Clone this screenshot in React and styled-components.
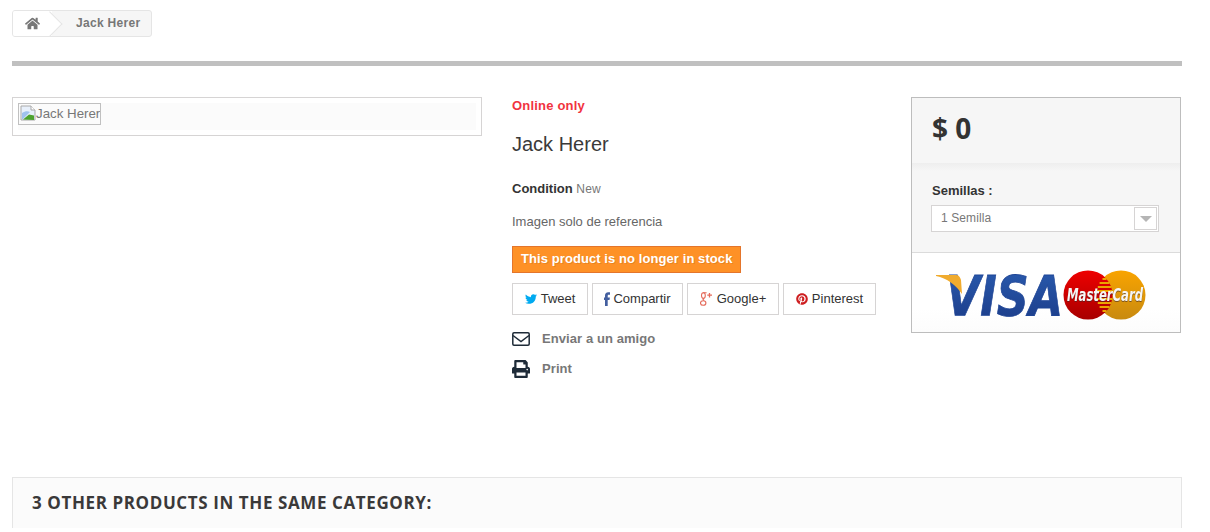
import React from 'react';
import styled, { createGlobalStyle } from 'styled-components';
import { FaHome, FaTwitter, FaPinterest, FaPrint } from 'react-icons/fa';

const GlobalStyle = createGlobalStyle`
  html, body {
    margin: 0;
    padding: 0;
    background: #fff;
    overflow: hidden;
  }
  body {
    font: 13px/18px "Liberation Sans", Arial, sans-serif;
    color: #777;
  }
`;

const Page = styled.div`
  width: 1170px;
  height: 532px;
  margin-left: 12px;
  padding-top: 10px;
  box-sizing: border-box;
  overflow: hidden;
`;

const Breadcrumb = styled.nav`
  display: inline-flex;
  height: 27px;
  box-sizing: border-box;
  border: 1px solid #e5e5e5;
  border-radius: 3px;
  background: #f6f6f6;
  overflow: hidden;
  vertical-align: top;
`;

const HomeCrumb = styled.a`
  position: relative;
  display: flex;
  align-items: center;
  width: 39px;
  padding-left: 12px;
  box-sizing: border-box;
  background: #fff;
  color: #777;
  font-size: 15px;

  svg {
    position: relative;
    z-index: 1;
  }

  &::after {
    content: '';
    position: absolute;
    top: 3.650px;
    left: 27.650px;
    width: 17.700px;
    height: 17.700px;
    box-sizing: border-box;
    transform: rotate(45deg);
    background: #fff;
    border-top: 1px solid #e5e5e5;
    border-right: 1px solid #e5e5e5;
  }
`;

const CrumbLabel = styled.span`
  padding: 0 11px 0 24px;
  font-size: 12px;
  line-height: 25px;
  font-weight: bold;
  letter-spacing: 0.3px;
  color: #777;
`;

const Rule = styled.hr`
  height: 5px;
  margin: 24px 0 31px;
  border: 0;
  background: #c0c0c0;
`;

const ProductRow = styled.div`
  display: grid;
  grid-template-columns: 470px 369px 270px;
  column-gap: 30px;
  align-items: start;
  height: 380px;
`;

const ImageFrame = styled.div`
  height: 39px;
  box-sizing: border-box;
  padding: 5px;
  border: 1px solid #d6d4d4;
`;

const ImageFill = styled.div`
  height: 27px;
  background: #fbfbfb;
`;

const BrokenImage = styled.span`
  display: inline-flex;
  align-items: flex-start;
  height: 22px;
  width: 83px;
  box-sizing: border-box;
  border: 1px solid #c0c0c0;
  font-size: 13.300px;
  line-height: 20px;
  color: #777;
  white-space: nowrap;
  overflow: hidden;

  svg {
    flex-shrink: 0;
    margin: 1px 0 0 1px;
  }
`;

const Details = styled.div`
  display: flex;
  flex-direction: column;
  align-items: flex-start;
  letter-spacing: 0.08px;
`;

const OnlineOnly = styled.p`
  margin: 0;
  height: 18px;
  line-height: 18px;
  font-weight: bold;
  letter-spacing: 0.2px;
  color: #f13340;
`;

const Title = styled.h1`
  margin: 17px 0 0;
  font-size: 20px;
  line-height: 24px;
  font-weight: normal;
  letter-spacing: 0;
  color: #3a3939;
`;

const Condition = styled.p`
  margin: 24px 0 0;
  line-height: 18px;
  font-size: 12px;
  letter-spacing: 0.25px;
  color: #777;

  strong {
    font-size: 13px;
    letter-spacing: 0;
    color: #333;
  }
`;

const Description = styled.p`
  margin: 15px 0 0;
  font-size: 13px;
  line-height: 18px;
  letter-spacing: 0;
  color: #666;
`;

const StockBadge = styled.span`
  margin-top: 15px;
  height: 27px;
  box-sizing: border-box;
  padding: 0 8px;
  border: 1px solid #e4752b;
  background: #fe9126;
  color: #fff;
  font-weight: bold;
  line-height: 23px;
  text-shadow: 1px 1px rgba(0, 0, 0, 0.1);
`;

const ShareRow = styled.div`
  display: flex;
  gap: 4px;
  margin-top: 10px;
`;

const ShareButton = styled.a`
  display: flex;
  align-items: center;
  justify-content: center;
  gap: ${({ $gap }) => $gap}px;
  width: ${({ $width }) => $width}px;
  height: 32px;
  box-sizing: border-box;
  border: 1px solid #d6d4d4;
  color: #333;
  font-size: 13px;
  letter-spacing: 0;

  svg {
    color: ${({ $color }) => $color};
    width: ${({ $iconWidth }) => $iconWidth}px;
    height: ${({ $iconHeight }) => $iconHeight}px;
  }
`;

const ActionLink = styled.a`
  display: flex;
  align-items: center;
  gap: 12px;
  height: 18px;
  margin-top: ${({ $top }) => $top}px;
  font-weight: bold;
  color: #777;

  svg {
    width: 18px;
    height: 18px;
    color: #1e2b38;
  }
`;

const BuyBox = styled.aside`
  display: flex;
  flex-direction: column;
  height: 236px;
  box-sizing: border-box;
  border: 1px solid #bdbdbd;
`;

const PriceBlock = styled.div`
  height: 65px;
  box-sizing: border-box;
  padding: 13px 20px 0;
  background: #f6f6f6;
`;

const Price = styled.span`
  font-family: "Open Sans", sans-serif;
  font-size: 28px;
  line-height: 35px;
  font-weight: 700;
  color: #333;
`;

const OptionsBlock = styled.div`
  height: 90px;
  box-sizing: border-box;
  padding: 19px 19px 0;
  background: linear-gradient(#eeeeee, #f6f6f6 8px);
  border-bottom: 1px solid #dbdbdb;
`;

const OptionLabel = styled.label`
  display: block;
  margin-left: 1px;
  font-weight: bold;
  color: #333;
  line-height: 18px;
`;

const SelectBox = styled.div`
  display: flex;
  align-items: center;
  justify-content: space-between;
  width: 228px;
  height: 27px;
  margin-top: 5px;
  padding: 0 1px 0 9px;
  box-sizing: border-box;
  border: 1px solid #d6d4d4;
  background: #fff;
  font-size: 12px;
  letter-spacing: 0.1px;
  color: #777;
`;

const SelectValue = styled.span`
  margin-top: -2px;
`;

const SelectArrow = styled.span`
  display: flex;
  align-items: center;
  justify-content: center;
  width: 23px;
  height: 23px;
  box-sizing: border-box;
  border: 1px solid #d6d4d4;

  &::before {
    content: '';
    border-top: 6px solid #b5b5b5;
    border-left: 6px solid transparent;
    border-right: 6px solid transparent;
  }
`;

const CardsBlock = styled.div`
  flex: 1;
  padding: 15px 0 0 23px;
  background: linear-gradient(#fff, #fff 70%, #fcfcfc);

  svg {
    display: block;
  }
`;

const VisaLabel = styled.text`
  font-family: "DejaVu Sans", sans-serif;
  font-size: 55px;
  font-weight: 700;
  font-style: italic;
  stroke: #1f4596;
  stroke-width: 0.8px;
`;

const MasterCardLabel = styled.text`
  font-family: "DejaVu Sans", sans-serif;
  font-size: 17px;
  font-weight: 700;
  font-style: italic;
  fill: #f6f6f6;
  filter: drop-shadow(0 1px 0 rgba(60, 40, 40, 0.6));
`;

const OtherProducts = styled.section`
  height: 51px;
  box-sizing: border-box;
  padding: 14px 19px 0;
  border: 1px solid #e5e5e5;
  border-bottom: 0;
  background: #fbfbfb;
`;

const OtherTitle = styled.h2`
  margin: 0;
  font-family: "Open Sans", sans-serif;
  font-size: 17px;
  line-height: 22px;
  font-weight: 700;
  letter-spacing: 0.6px;
  text-transform: uppercase;
  color: #3a3939;
`;

const MissingIcon = () => (
  <svg width="16" height="16" viewBox="0 0 16 16" aria-hidden="true">
    <path d="M1 1h10l4 4v10H1z" fill="#e8f0fb" stroke="#a9a9a9" />
    <path d="M11 1v4h4" fill="#fff" stroke="#a9a9a9" />
    <path d="M2 8c3-2 6-2 8-1L3 14H2z" fill="#9fc2ee" />
    <path d="M3 14.500l6-5 5 1v4.500z" fill="#4da32f" />
  </svg>
);

const FacebookIcon = () => (
  <svg viewBox="0 0 6 14" aria-hidden="true">
    <path
      d="M3.700 14V8h1.800L5.900 5.500H3.700V4c0-.8.300-1.200 1.200-1.200H6V.2H4.300C2 .2 1 1.500 1 3.500v2H0V8h1v6z"
      fill="currentColor"
    />
  </svg>
);

const GooglePlusIcon = () => (
  <svg viewBox="0 0 13 14" aria-hidden="true">
    <g fill="none" stroke="currentColor" strokeWidth="1.100">
      <ellipse cx="3.400" cy="3.600" rx="1.900" ry="2.800" />
      <ellipse cx="3.200" cy="11" rx="2.700" ry="2.300" />
      <path d="M3.800 6.400c-1.200.6-1 1.500.3 2.200M2.800.8h3.800" />
      <path d="M9.500 1v4.500M7.300 3.200h4.700" strokeWidth="1.300" />
    </g>
  </svg>
);

const EnvelopeIcon = () => (
  <svg viewBox="0 0 18 18" aria-hidden="true">
    <rect x="0.800" y="2.800" width="16.400" height="12.400" rx="1.200" fill="none" stroke="currentColor" strokeWidth="1.500" />
    <path d="M1 5.500l8 6 8-6" fill="none" stroke="currentColor" strokeWidth="1.500" />
  </svg>
);

const CardLogos = () => (
  <svg width="216" height="54" viewBox="0 0 216 54" aria-hidden="true">
    <defs>
      <linearGradient id="visaBlue" x1="0" y1="0" x2="0" y2="1">
        <stop offset="0" stopColor="#2a5cb0" />
        <stop offset="1" stopColor="#1b3a86" />
      </linearGradient>
      <linearGradient id="mcRed" x1="0" y1="0" x2="0" y2="1">
        <stop offset="0" stopColor="#ee0000" />
        <stop offset="1" stopColor="#a80000" />
      </linearGradient>
      <linearGradient id="mcGold" x1="0" y1="0" x2="0" y2="1">
        <stop offset="0" stopColor="#f9a400" />
        <stop offset="1" stopColor="#c88a10" />
      </linearGradient>
    </defs>
    <VisaLabel transform="translate(11 47) scale(0.807 1)" fill="url(#visaBlue)">
      VISA
    </VisaLabel>
    <path d="M1 7h20c3 0 4 2 5 5l1 14C21 17 12 10 1 8z" fill="#f0ab2e" />
    <circle cx="186" cy="27" r="24.500" fill="url(#mcGold)" />
    <circle cx="153" cy="27" r="24.500" fill="url(#mcRed)" />
    <path
      d="M167.500 11h4M164.600 15h9.800M162.800 19h13.400M161.800 23h15.400M161.800 31h15.400M162.800 35h13.400M164.600 39h9.800M167.500 43h4"
      stroke="#eca400"
      strokeWidth="2"
    />
    <MasterCardLabel transform="translate(132 33) scale(0.685 1)">
      MasterCard
    </MasterCardLabel>
  </svg>
);

export default function App() {
  return (
    <>
      <GlobalStyle />
      <Page>
        <Breadcrumb>
          <HomeCrumb>
            <FaHome />
          </HomeCrumb>
          <CrumbLabel>Jack Herer</CrumbLabel>
        </Breadcrumb>
        <Rule />
        <ProductRow>
          <ImageFrame>
            <ImageFill>
              <BrokenImage>
                <MissingIcon />
                Jack Herer
              </BrokenImage>
            </ImageFill>
          </ImageFrame>
          <Details>
            <OnlineOnly>Online only</OnlineOnly>
            <Title>Jack Herer</Title>
            <Condition>
              <strong>Condition</strong> New
            </Condition>
            <Description>Imagen solo de referencia</Description>
            <StockBadge>This product is no longer in stock</StockBadge>
            <ShareRow>
              <ShareButton $width={76} $gap={4} $color="#00aaf0" $iconWidth={12} $iconHeight={12}>
                <FaTwitter />
                Tweet
              </ShareButton>
              <ShareButton $width={91} $gap={3} $color="#435f9f" $iconWidth={6} $iconHeight={14}>
                <FacebookIcon />
                Compartir
              </ShareButton>
              <ShareButton $width={92} $gap={4} $color="#e46a5a" $iconWidth={13} $iconHeight={14}>
                <GooglePlusIcon />
                Google+
              </ShareButton>
              <ShareButton $width={93} $gap={4} $color="#ce1f21" $iconWidth={12} $iconHeight={12}>
                <FaPinterest />
                Pinterest
              </ShareButton>
            </ShareRow>
            <ActionLink $top={15}>
              <EnvelopeIcon />
              Enviar a un amigo
            </ActionLink>
            <ActionLink $top={12}>
              <FaPrint />
              Print
            </ActionLink>
          </Details>
          <BuyBox>
            <PriceBlock>
              <Price>$ 0</Price>
            </PriceBlock>
            <OptionsBlock>
              <OptionLabel>Semillas :</OptionLabel>
              <SelectBox>
                <SelectValue>1 Semilla</SelectValue>
                <SelectArrow />
              </SelectBox>
            </OptionsBlock>
            <CardsBlock>
              <CardLogos />
            </CardsBlock>
          </BuyBox>
        </ProductRow>
        <OtherProducts>
          <OtherTitle>3 other products in the same category:</OtherTitle>
        </OtherProducts>
      </Page>
    </>
  );
}
